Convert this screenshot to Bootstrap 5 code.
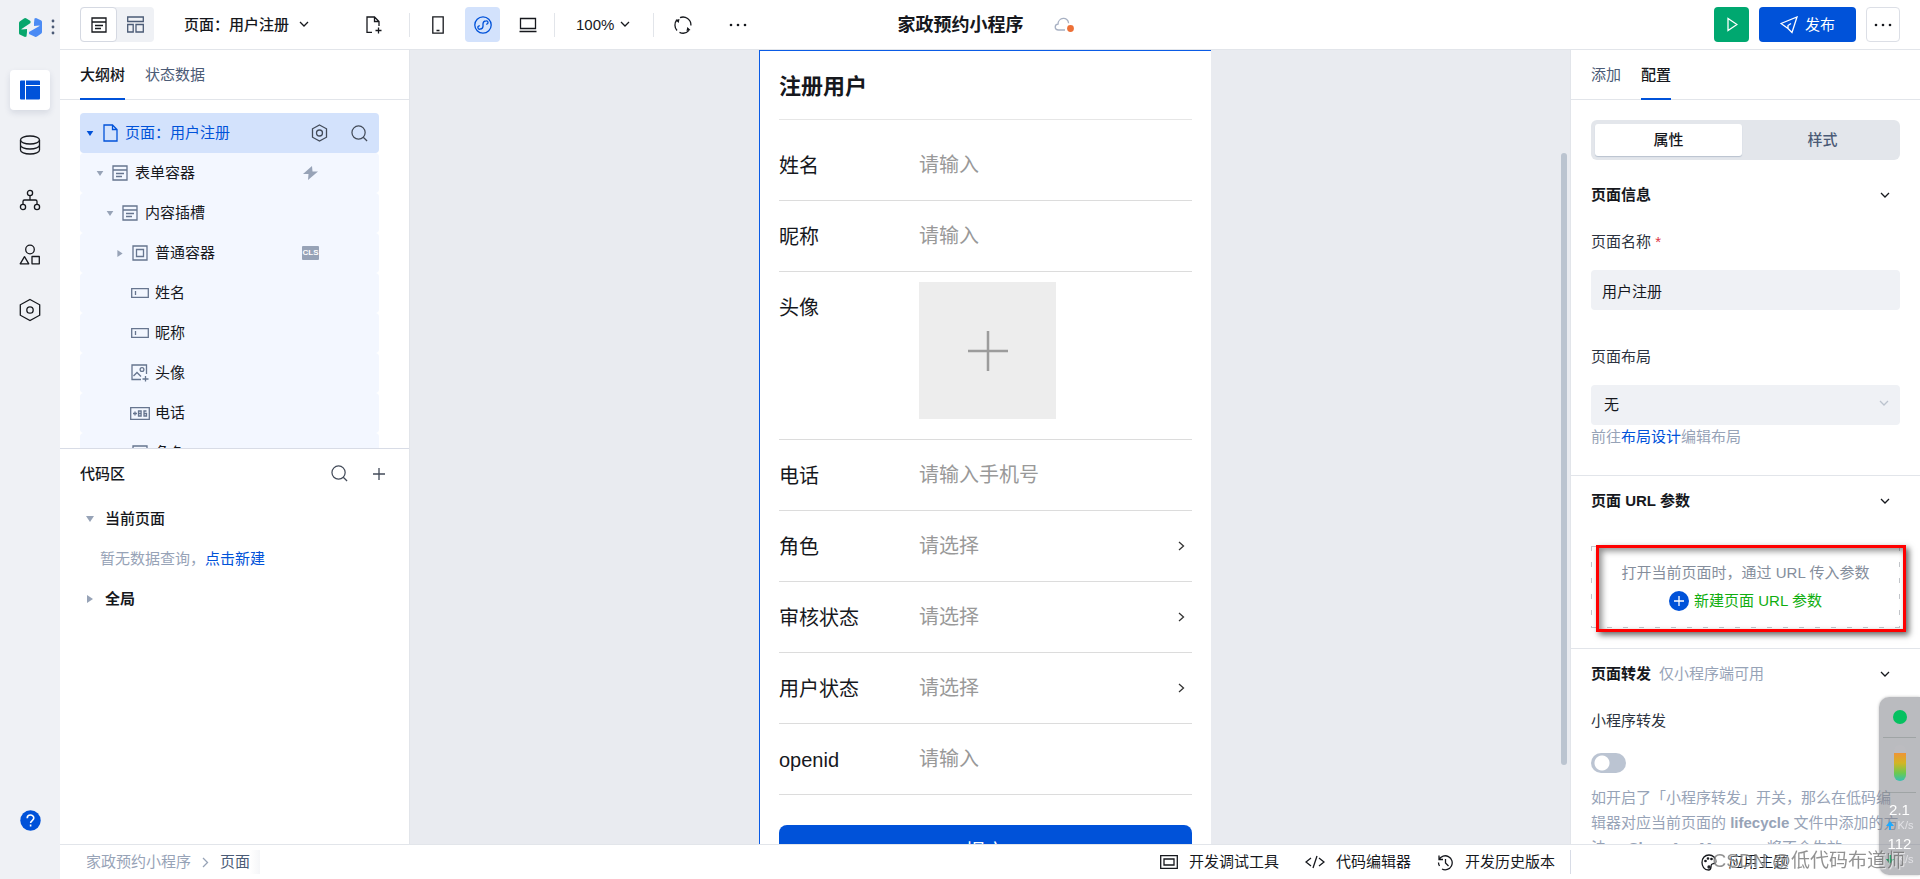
<!DOCTYPE html>
<html lang="zh-CN">
<head>
<meta charset="utf-8">
<meta name="viewport" content="width=device-width, initial-scale=1">
<title>家政预约小程序</title>
<link href="https://cdn.jsdelivr.net/npm/bootstrap@5.3.0/dist/css/bootstrap.min.css" rel="stylesheet">
<style>
  :root { --blue:#0052d9; --pale:#d3e2fc; --line:#e2e5ea; --ink:#16181d; --slate:#4b5b76; --mute:#97a3b7; --rail:#eff1f5; }
  body { font-family:"Liberation Sans","Noto Sans CJK SC",sans-serif; font-size:15px; line-height:24px; color:var(--ink); background:#fff; }
  svg { display:block; flex:none; fill:none; stroke:currentColor; stroke-width:1.3; }
  .fill { fill:currentColor; stroke:none; }
  a { color:var(--blue); text-decoration:none; }
  .clip { min-height:0; min-width:0; overflow:hidden; }
  .plain { padding:0; border:0; color:inherit; display:inline-flex; align-items:center; justify-content:center; font-size:15px; line-height:24px; border-radius:4px; }
  .sz20 { width:20px; height:20px; }
  .sz35 { width:35px; height:35px; }
  .c-mute { color:var(--mute); }
  .c-slate { color:var(--slate); }
  .c-icon { color:#434b59; }

  .rail { width:60px; background:var(--rail); padding-bottom:39px; }
  .rail .logo { height:70px; padding:17px 0 0 19px; gap:9px; align-items:flex-start; }
  .rail-btn { width:40px; height:40px; }
  .rail-btn.on { background:#fff; color:var(--blue); box-shadow:0 3px 6px rgba(30,50,90,.12); }

  .topbar { height:50px; padding:0 20px; border-bottom:1px solid var(--line); display:grid; grid-template-columns:1fr auto 1fr; align-items:center; }
  .topbar > div { height:35px; }
  .modes { background:var(--rail); border-radius:4px; }
  .modes .plain { width:37px; height:35px; }
  .modes .on { background:#fff; border:1px solid #d5d9e2; }
  .rule { width:1px; height:24px; background:var(--line); }
  .app-title { font-size:18px; font-weight:700; }
  .publish { width:97px; height:35px; background:var(--blue); color:#fff; gap:7px; }
  .play { background:#00a870; color:#fff; }
  .more { width:34px; height:35px; border:1px solid #dcdfe6; }

  .side-l { width:350px; border-right:1px solid var(--line); }
  .side-r { width:350px; border-left:1px solid var(--line); }
  .tabs { height:50px; padding:0 20px; gap:20px; border-bottom:1px solid var(--line); flex:none; }
  .tabs .plain { height:50px; border-radius:0; border-bottom:2px solid transparent; color:var(--slate); padding-top:2px; }
  .tabs .on { border-color:var(--blue); color:var(--ink); font-weight:500; }
  .tree { flex:11 1 0; padding:13px 30px 0 20px; }
  .code { flex:13 1 0; border-top:1px solid #d8dce6; padding:0 20px; }
  .node { height:40px; border-radius:4px; background:#f3f7ff; padding:0 10px 0 5px; }
  .node.on { background:var(--pale); color:var(--blue); }
  .node .caret { width:10px; margin-right:5px; color:var(--mute); }
  .node.on .caret { color:var(--blue); }
  .node .ico { width:20px; margin-right:5px; color:#66758f; display:flex; justify-content:center; }
  .node.on .ico { color:var(--blue); }
  .l1 { padding-left:15px; padding-right:60px; } .l2 { padding-left:25px; } .l3 { padding-left:35px; padding-right:60px; }
  .cls { background:var(--mute); color:#fff; font-size:8px; line-height:14px; width:17px; border-radius:1px; font-weight:700; text-align:center; }
  .code-head { height:50px; }
  .code-row { height:40px; padding-left:5px; gap:10px; }

  .stage { background:#e9ebf0; padding-right:10px; position:relative; }
  .thumb { position:absolute; right:3px; top:13%; bottom:10%; width:6px; border-radius:3px; background:#bbc4d0; }
  .phone { width:452px; border:1px solid #0a5be6; border-width:1px 0 0 1px; padding:0 19px; background:#fff; }
  .phone h1 { font-size:22px; line-height:30px; font-weight:700; margin:0; padding:21px 0 17px; border-bottom:1px solid #e6e6e6; }
  .frow { display:flex; min-height:71px; border-bottom:1px solid #dcdcdc; font-size:20px; line-height:30px; align-items:flex-start; }
  .frow > label { width:140px; flex:none; padding-top:21px; }
  .frow .form-control, .frow .form-select { flex:1; border:0; padding:20px 0; font:inherit; color:#999; background:none; border-radius:0; height:70px; }
  .frow ::placeholder { color:#999; }
  .frow .pick { position:relative; flex:1; display:flex; align-items:center; }
  .frow .pick svg { position:absolute; right:7px; pointer-events:none; color:#333; }
  .upload { width:137px; height:137px; background:#ededed; margin:10px 0 20px; color:#9c9c9c; border-radius:0; }
  .submit { width:100%; height:53px; margin-top:30px; border-radius:8px; background:var(--blue); color:#fff; font-size:20px; line-height:30px; }

  .config { padding:20px 20px 0; }
  .seg { height:40px; padding:4px; gap:7px; border-radius:6px; background:#e3e6eb; }
  .seg .plain { flex:1; color:var(--slate); font-weight:500; }
  .seg .on { background:#fff; color:var(--ink); box-shadow:0 1px 1px #b8c1cf; border-radius:3px; }
  .sec-head { height:50px; padding-right:10px; }
  .sec-head h2 { font-size:15px; line-height:24px; font-weight:700; margin:0; }
  .lab { display:block; margin:0 0 16px; color:#2c3340; }
  .boxed { background-color:var(--rail); border:0; height:40px; font-size:15px; line-height:24px; padding:8px 11px; color:var(--ink); border-radius:4px; }
  .boxed.form-select { background-image:none; padding-left:13px; }
  .sel { position:relative; }
  .sel svg { position:absolute; right:11px; top:15px; color:#bcc3ce; pointer-events:none; }
  .band { margin:0 -20px; padding:0 20px; border-bottom:1px solid var(--line); }
  .params { height:82px; margin:20px 0; padding:13px 0; line-height:28px; color:#858e9c; text-align:center; position:relative;
    --h:linear-gradient(90deg,#c3c6cb 5px,transparent 5px); --v:linear-gradient(#c3c6cb 5px,transparent 5px);
    background:var(--h) 0 0/16px 1px repeat-x, var(--h) 0 100%/16px 1px repeat-x, var(--v) 0 0/1px 16px repeat-y, var(--v) 100% 0/1px 16px repeat-y; }
  .params .plain { color:#0fae0f; gap:5px; line-height:28px; vertical-align:top; }
  .frame { position:absolute; left:5px; right:-6px; top:-1px; bottom:-4px; border:3px solid #f00; box-shadow:3px 3px 6px rgba(0,0,0,.6), inset 3px 3px 6px rgba(0,0,0,.45); pointer-events:none; }
  .toggle.form-check-input { width:35px; height:20px; border:0; border-radius:10px; margin:0; background:#bbc4d2; background-image:radial-gradient(circle at 11px 10px,#fff 7px,transparent 8px); background-size:100% 100%; display:block; }
  .hint { line-height:25px; margin:12px 0 0; }

  .foot { height:35px; border-top:1px solid var(--line); }
  .foot .plain { gap:11px; }
  .foot-r { width:350px; position:relative; }
  .foot-r::before { content:""; position:absolute; left:0; top:0; bottom:0; width:1px; background:#d8dce6; }
  .crumb { background:linear-gradient(90deg,#fff 80%,#f5f6f8); padding:0 10px 0 11px; }

  .monitor { position:fixed; right:0; bottom:4px; width:41px; height:178px; border-radius:10px 0 0 10px; background:rgba(130,131,138,.55); box-shadow:0 0 3px rgba(0,0,0,.25); color:#fff; text-align:center; font-size:15px; line-height:18px; }
  .monitor .dot { width:14px; height:14px; border-radius:50%; background:#05c160; margin:13px auto 13px; }
  .monitor .meter { width:12px; height:36px; border-radius:6px; margin:7px auto 11px; background:linear-gradient(#bcbcc0 22%,#ef9436 22%,#d3b524 50%,#6bc950 78%,#35bfb5); }
  .monitor hr { margin:0 4px; border-color:#8d9694; opacity:.6; }
  .monitor small { font-size:11px; line-height:12px; display:flex; align-items:center; justify-content:center; gap:4px; color:#e2e2e6; }
  .sign { position:fixed; right:15px; bottom:4px; font-size:19px; line-height:28px; color:rgba(110,110,110,.75); text-shadow:1px 1px 1px rgba(255,255,255,.7); pointer-events:none; }
</style>
</head>
<body>
<svg width="0" height="0" class="position-absolute" aria-hidden="true">
  <symbol id="down" viewBox="0 0 10 7"><path d="M1 1l4 4 4-4"/></symbol>
  <symbol id="form" viewBox="0 0 16 16"><path d="M1 1h14v14H1zM1 5h14M4 8.500h8M4 11.500h6"/></symbol>
  <symbol id="tri-d" viewBox="0 0 8 6"><path class="fill" d="M0 0h8L4 6z"/></symbol>
  <symbol id="tri-r" viewBox="0 0 6 8"><path class="fill" d="M0 0v8l6-4z"/></symbol>
  <symbol id="search" viewBox="0 0 18 18"><circle cx="8" cy="8" r="7"/><path d="M13 13l4 4"/></symbol>
  <symbol id="dots" viewBox="0 0 18 4"><g class="fill"><circle cx="2" cy="2" r="1.300"/><circle cx="9" cy="2" r="1.300"/><circle cx="16" cy="2" r="1.300"/></g></symbol>
  <symbol id="field" viewBox="0 0 18 10"><path d="M.7.7h16.600v8.600H.7zM4.500 3v4"/></symbol>
</svg>

<div class="d-flex vh-100 overflow-hidden">
  <nav class="rail d-flex flex-column align-items-center flex-shrink-0" aria-label="主导航">
    <div class="logo d-flex w-100">
      <svg class="fill" width="23" height="21" viewBox="0 0 23 21"><path fill="#08a66c" d="M0 6Q0 5 1 4.300L5 1.400Q6 .8 7 1.300L11.500 4v2L2.500 12v.5L8 12v3l-.5 4.500L6 20l-5.300-2.500Q0 17 0 16z"/><path fill="#4b8bf4" transform="rotate(180 11.500 10.500)" d="M0 6Q0 5 1 4.300L5 1.400Q6 .8 7 1.300L13 4v2L2.500 12v.5L8 12v3l-.5 4.500L6 20l-5.300-2.500Q0 17 0 16z"/></svg>
      <svg width="4" height="18" viewBox="0 0 4 18" class="fill c-slate"><circle cx="2" cy="4" r="1.400"/><circle cx="2" cy="10" r="1.400"/><circle cx="2" cy="16" r="1.400"/></svg>
    </div>
    <div class="d-flex flex-column" style="gap:15px">
      <button class="btn plain rail-btn on" aria-label="页面"><svg class="fill" width="20" height="20" viewBox="0 0 20 20"><path d="M1 .5h4v19H1a1 1 0 0 1-1-1v-17a1 1 0 0 1 1-1zM6 .5h13a1 1 0 0 1 1 1V5H6zM6 6h14v12.500a1 1 0 0 1-1 1H6z"/></svg></button>
      <button class="btn plain rail-btn" aria-label="数据"><svg width="22" height="20" viewBox="0 0 22 20"><ellipse cx="11" cy="5" rx="9.500" ry="4"/><path d="M1.500 5v10c0 2.200 4.200 4 9.500 4s9.500-1.800 9.500-4V5M1.500 10c0 2.200 4.200 4 9.500 4s9.500-1.800 9.500-4"/></svg></button>
      <button class="btn plain rail-btn" aria-label="流程"><svg width="22" height="22" viewBox="0 0 22 22"><circle cx="11" cy="4" r="2.600"/><circle cx="4" cy="18" r="2.600"/><circle cx="18" cy="18" r="2.600"/><path d="M11 6.600V11M4 15.400V12.500Q4 11 5.500 11h11q1.500 0 1.500 1.500v2.900"/></svg></button>
      <button class="btn plain rail-btn" aria-label="组件"><svg width="22" height="22" viewBox="0 0 22 22"><circle cx="11" cy="5.500" r="4.300"/><path d="M5.500 12.700L1.200 19.800h8.600zM13 12.500h7.300v7.300H13z" stroke-linejoin="round"/></svg></button>
      <button class="btn plain rail-btn" aria-label="设置"><svg width="22" height="24" viewBox="0 0 22 24"><path d="M11 1.500l9.700 5.300v10.400L11 22.500l-9.700-5.300V6.800z"/><circle cx="11" cy="12" r="3.200"/></svg></button>
    </div>
    <button class="btn plain rail-btn mt-auto" aria-label="帮助"><svg width="21" height="21" viewBox="0 0 21 21"><circle cx="10.500" cy="10.500" r="10.200" fill="#0052d9" stroke="none"/><path stroke="#fff" stroke-width="1.600" d="M7.200 8.300c0-4.400 6.600-4.200 6.600-.2 0 2.300-3.200 2.600-3.200 5M10.600 14.600v1.900"/></svg></button>
  </nav>

  <div class="d-flex flex-column flex-fill clip">
    <header class="topbar flex-shrink-0">
      <div class="d-flex align-items-center">
        <div class="modes d-flex">
          <button class="btn plain on" aria-label="列表"><svg width="16" height="16"><use href="#form"/></svg></button>
          <button class="btn plain" aria-label="布局"><svg width="17" height="17" viewBox="0 0 17 17" class="c-slate"><path d="M.7 1h15.600v4.500H.7zM.7 8.500h5.500V16H.7zM9 8.500h7.300V16H9z"/></svg></button>
        </div>
        <button class="btn plain fw-medium" style="gap:10px;margin-left:30px">页面：用户注册<svg width="10" height="7"><use href="#down"/></svg></button>
        <button class="btn plain sz20" style="margin:0 25px 0 55px" aria-label="新建页面"><svg width="16" height="18" viewBox="0 0 16 18"><path d="M6 16.300H1V1h7.500L13 5.500V10M8.500 1v4.500H13M12.500 11.500v6M9.500 14.500h6"/></svg></button>
        <span class="rule"></span>
        <button class="btn plain sz35" style="margin-left:10px" aria-label="手机"><svg width="12" height="18" viewBox="0 0 12 18"><path d="M.8.8h10.400v16.400H.8zM4.500 14.500h3"/></svg></button>
        <button class="btn plain sz35" style="margin:0 10px;background:var(--pale);color:var(--blue)" aria-label="小程序"><svg width="18" height="18" viewBox="0 0 18 18"><circle cx="9" cy="9" r="8.200"/><path d="M5.800 9.600c-3 .6-2.200 4 .2 3.600 1.700-.3 3-1.200 3-3V7.800c0-1.800 1.300-2.900 3-3 2.400-.2 3 2.900.2 3.600"/></svg></button>
        <button class="btn plain sz35" aria-label="桌面"><svg width="18" height="16" viewBox="0 0 18 16"><path d="M1.500 1.500h15v10h-15zM.5 14.500h17"/></svg></button>
        <span class="rule" style="margin:0 21px 0 9px"></span>
        <button class="btn plain" style="gap:6px">100%<svg width="10" height="7"><use href="#down"/></svg></button>
        <span class="rule" style="margin:0 19px 0 23px"></span>
        <button class="btn plain sz20" aria-label="刷新"><svg width="18" height="18" viewBox="0 0 18 18"><path d="M3 14.500A8 8 0 0 1 3 3.800M6 1.600A8 8 0 0 1 16.900 9.500M15 14.300A8 8 0 0 1 5.500 16.300"/><path class="fill" d="M1.500 4l4-1-.8 4zM16.500 14l-4 1 .8-4z"/></svg></button>
        <button class="btn plain sz20" style="margin-left:35px" aria-label="更多"><svg width="18" height="4"><use href="#dots"/></svg></button>
      </div>
      <div class="d-flex align-items-center" style="gap:30px">
        <span class="app-title text-nowrap">家政预约小程序</span>
        <button class="btn plain pe-2" aria-label="保存状态"><svg width="21" height="16" viewBox="0 0 21 16"><path stroke="#a7b0c2" d="M11 13H4.500C.2 13 .2 7.500 4 7.200 4 .2 14.200-.8 14.600 6.300"/><circle cx="16.500" cy="11.500" r="3.400" fill="#ed7037" stroke="none"/></svg></button>
      </div>
      <div class="d-flex align-items-center justify-content-end" style="gap:10px">
        <button class="btn plain sz35 play" aria-label="预览"><svg width="12" height="15" viewBox="0 0 12 15"><path d="M2 1.500v12l9-6z"/></svg></button>
        <button class="btn plain publish"><svg width="18" height="18" viewBox="0 0 18 18"><path d="M1 7.500L17 1l-5 15.500-4-4zM8 12.500v-3l3-2"/></svg>发布</button>
        <button class="btn plain more" aria-label="更多操作"><svg width="18" height="4"><use href="#dots"/></svg></button>
      </div>
    </header>

    <div class="d-flex flex-fill clip">
      <aside class="side-l d-flex flex-column flex-shrink-0">
        <div class="tabs d-flex"><button class="btn plain on">大纲树</button><button class="btn plain">状态数据</button></div>
        <div class="tree clip">
          <div class="node on d-flex align-items-center"><svg class="caret" height="5"><use href="#tri-d"/></svg><span class="ico"><svg width="15" height="18" viewBox="0 0 15 18"><path d="M1 1h8.500L14 5.500V17H1zM9.500 1v4.500H14"/></svg></span>页面：用户注册
            <button class="btn plain sz20 ms-auto c-icon" aria-label="页面设置"><svg width="17" height="18" viewBox="0 0 17 18"><path d="M8.500 1l7 3.800v8.400l-7 3.800-7-3.800V4.800z"/><circle cx="8.500" cy="9" r="3"/></svg></button>
            <button class="btn plain sz20 c-icon" style="margin-left:20px" aria-label="搜索节点"><svg width="17" height="17"><use href="#search"/></svg></button></div>
          <div class="node l1 d-flex align-items-center"><svg class="caret" height="5"><use href="#tri-d"/></svg><span class="ico"><svg width="16" height="16"><use href="#form"/></svg></span>表单容器<svg class="fill c-mute ms-auto" width="17" height="14" viewBox="0 0 15 14"><path d="M9 0L0 8h5.500L5 14 15 5.500H9.500z"/></svg></div>
          <div class="node l2 d-flex align-items-center"><svg class="caret" height="5"><use href="#tri-d"/></svg><span class="ico"><svg width="16" height="16"><use href="#form"/></svg></span>内容插槽</div>
          <div class="node l3 d-flex align-items-center"><svg class="caret" height="7"><use href="#tri-r"/></svg><span class="ico"><svg width="16" height="16" viewBox="0 0 16 16"><path d="M1 1h14v14H1zM4.500 4.500h7v7h-7z"/></svg></span>普通容器<span class="cls ms-auto">CLS</span></div>
          <div class="node l3 d-flex align-items-center"><span class="caret"></span><span class="ico"><svg width="18" height="10"><use href="#field"/></svg></span>姓名</div>
          <div class="node l3 d-flex align-items-center"><span class="caret"></span><span class="ico"><svg width="18" height="10"><use href="#field"/></svg></span>昵称</div>
          <div class="node l3 d-flex align-items-center"><span class="caret"></span><span class="ico"><svg width="18" height="18" viewBox="0 0 18 18"><path d="M10 15.500H1V1h14.500v9M2.500 12L6 8.500l4 4M14.500 12v5.500M11.500 15h6"/><circle cx="11" cy="5.500" r="1.900"/></svg></span>头像</div>
          <div class="node l3 d-flex align-items-center"><span class="caret"></span><span class="ico"><svg width="20" height="13" viewBox="0 0 20 13"><path d="M.7.7h18.600v11.600H.7zM3 6.500h4M5 4.500v4M8.500 4h2.600v5H8.500zM8.500 6.500H11M16.500 4H14v5h2.500V6.500H14"/></svg></span>电话</div>
          <div class="node l3 d-flex align-items-center"><span class="caret"></span><span class="ico"><svg width="16" height="16"><use href="#form"/></svg></span>角色</div>
        </div>
        <div class="code clip">
          <div class="code-head d-flex align-items-center"><span class="fw-medium">代码区</span><button class="btn plain sz20 ms-auto c-icon" aria-label="搜索代码"><svg width="17" height="17"><use href="#search"/></svg></button><button class="btn plain sz20 c-icon" style="margin-left:20px" aria-label="新增"><svg width="12" height="12" viewBox="0 0 12 12"><path d="M6 0v12M0 6h12"/></svg></button></div>
          <div class="code-row d-flex align-items-center"><svg class="c-mute" width="10" height="6"><use href="#tri-d"/></svg><span class="fw-medium">当前页面</span></div>
          <div class="code-row d-flex align-items-center c-mute"><span style="padding-left:15px">暂无数据查询，<a href="#">点击新建</a></span></div>
          <div class="code-row d-flex align-items-center"><svg class="c-mute" width="10" height="8"><use href="#tri-r"/></svg><span class="fw-bold">全局</span></div>
        </div>
      </aside>

      <main class="stage flex-fill clip">
        <form class="phone mx-auto">
          <h1>注册用户</h1>
          <div style="padding-top:10px">
            <div class="frow"><label for="f1">姓名</label><input id="f1" class="form-control" placeholder="请输入"></div>
            <div class="frow"><label for="f2">昵称</label><input id="f2" class="form-control" placeholder="请输入"></div>
            <div class="frow"><label for="f3">头像</label><button id="f3" type="button" class="btn plain upload" aria-label="上传头像"><svg width="40" height="40" viewBox="0 0 40 40" style="stroke-width:2.500"><path d="M20 0v40M0 20h40"/></svg></button></div>
            <div class="frow"><label for="f4">电话</label><input id="f4" type="tel" class="form-control" placeholder="请输入手机号"></div>
            <div class="frow"><label for="f5">角色</label><div class="pick"><select id="f5" class="form-select"><option>请选择</option></select><svg width="7" height="10" viewBox="0 0 7 10"><path d="M1 1l4.500 4L1 9"/></svg></div></div>
            <div class="frow"><label for="f6">审核状态</label><div class="pick"><select id="f6" class="form-select"><option>请选择</option></select><svg width="7" height="10" viewBox="0 0 7 10"><path d="M1 1l4.500 4L1 9"/></svg></div></div>
            <div class="frow"><label for="f7">用户状态</label><div class="pick"><select id="f7" class="form-select"><option>请选择</option></select><svg width="7" height="10" viewBox="0 0 7 10"><path d="M1 1l4.500 4L1 9"/></svg></div></div>
            <div class="frow"><label for="f8">openid</label><input id="f8" class="form-control" placeholder="请输入"></div>
          </div>
          <button type="button" class="btn plain submit">提交</button>
        </form>
        <div class="thumb"></div>
      </main>

      <aside class="side-r d-flex flex-column flex-shrink-0">
        <div class="tabs d-flex"><button class="btn plain">添加</button><button class="btn plain on">配置</button></div>
        <div class="config flex-fill clip">
          <div class="seg d-flex"><button class="btn plain on">属性</button><button class="btn plain">样式</button></div>
          <section class="band" style="padding-top:10px">
            <div class="sec-head d-flex align-items-center justify-content-between"><h2>页面信息</h2><svg width="10" height="7"><use href="#down"/></svg></div>
            <label class="lab" for="pname" style="padding-top:10px">页面名称 <span class="text-danger">*</span></label>
            <input id="pname" class="form-control boxed" value="用户注册">
            <label class="lab" for="playout" style="padding-top:35px">页面布局</label>
            <div class="sel"><select id="playout" class="form-select boxed"><option>无</option></select><svg width="10" height="7"><use href="#down"/></svg></div>
            <div class="c-mute" style="padding-bottom:26px">前往<a href="#">布局设计</a>编辑布局</div>
          </section>
          <section class="band">
            <div class="sec-head d-flex align-items-center justify-content-between"><h2>页面 URL 参数</h2><svg width="10" height="7"><use href="#down"/></svg></div>
            <div class="params"><div>打开当前页面时，通过 URL 传入参数</div>
              <button class="btn plain"><svg width="20" height="20" viewBox="0 0 20 20"><circle cx="10" cy="10" r="10" fill="#0052d9" stroke="none"/><path stroke="#fff" d="M10 5v10M5 10h10"/></svg>新建页面 URL 参数</button>
              <div class="frame"></div></div>
          </section>
          <section>
            <div class="sec-head d-flex align-items-center"><h2>页面转发</h2><span class="c-mute ms-2">仅小程序端可用</span><svg class="ms-auto" width="10" height="7"><use href="#down"/></svg></div>
            <label class="lab c-slate" for="share" style="padding:10px 0 4px">小程序转发</label>
            <input id="share" type="checkbox" role="switch" class="form-check-input toggle">
            <p class="hint c-mute">如开启了「小程序转发」开关，那么在低码编辑器对应当前页面的 <b>lifecycle</b> 文件中添加的方法 <b>onShareAppMessage</b> 将不会生效</p>
          </section>
        </div>
      </aside>
    </div>

    <footer class="foot d-flex align-items-center flex-shrink-0">
      <nav class="d-flex align-items-center h-100" style="padding-left:26px" aria-label="位置"><a href="#" class="c-mute">家政预约小程序</a><svg class="c-mute" style="margin-left:11px" width="7" height="11" viewBox="0 0 7 11"><path d="M1 1l4.500 4.500L1 10"/></svg><span class="crumb c-slate">页面</span></nav>
      <div class="d-flex ms-auto" style="gap:26px;padding-right:15px">
        <button class="btn plain"><svg width="18" height="14" viewBox="0 0 18 14"><path d="M.7.7h16.600v12.600H.7zM4 4h10v6H4z"/></svg>开发调试工具</button>
        <button class="btn plain"><svg width="20" height="14" viewBox="0 0 20 14"><path d="M6 3L1 7l5 4M14 3l5 4-5 4M12 1L8 13"/></svg>代码编辑器</button>
        <button class="btn plain"><svg width="17" height="17" viewBox="0 0 17 17"><path d="M2 1.500v4h4M2 5.500A7 7 0 1 1 5 15M1.500 8.500a7 7 0 0 0 1 3.500M8.500 5v4l3 3"/></svg>开发历史版本</button>
      </div>
      <div class="foot-r d-flex justify-content-center"><button class="btn plain"><svg width="16" height="17" viewBox="0 0 16 17"><path d="M7.500 16C3 16 1 12 1 8.500 1 4 4 1 8 1s7 3 7 6.500c0 3-3.500 1.500-4.500 3S11 16 7.500 16z"/><circle cx="4.500" cy="7" r=".7"/><circle cx="7" cy="4.500" r=".7"/><circle cx="10.500" cy="5" r=".7"/><circle cx="8" cy="13" r="1"/></svg>应用主题</button></div>
    </footer>
  </div>
</div>

<div class="monitor">
  <div class="dot"></div><hr><div class="meter"></div><hr>
  <div style="padding-top:8px">2.1</div><small><svg class="fill" style="color:#1eaaff" width="8" height="9" viewBox="0 0 8 9"><path d="M4 0l4 5H5v4H3V5H0z"/></svg>K/s</small>
  <div style="padding-top:4px">112</div><small><svg class="fill" style="color:#0aa15c" width="8" height="9" viewBox="0 0 8 9"><path d="M4 9L0 4h3V0h2v4h3z"/></svg>K/s</small>
</div>
<div class="sign">CSDN @低代码布道师</div>
<script src="https://cdn.jsdelivr.net/npm/bootstrap@5.3.0/dist/js/bootstrap.bundle.min.js"></script>
</body>
</html>
